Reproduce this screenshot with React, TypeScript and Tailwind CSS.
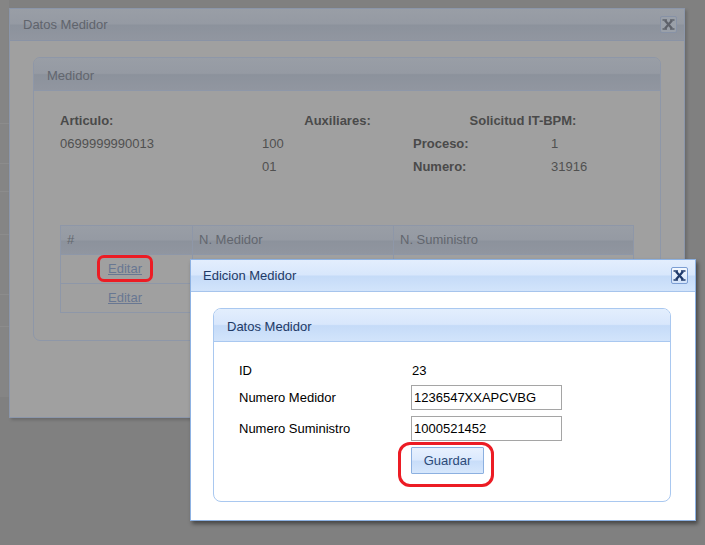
const CloseButton = ({ dim }: { dim?: boolean }) => (
  <span
    className={
      dim
        ? "flex h-[17px] w-[17px] items-center justify-center rounded-[2px] border border-[#8792a6] bg-[#9aa0a9]"
        : "flex h-[17px] w-[17px] items-center justify-center rounded-[2px] border border-[#7c9ed3] bg-[linear-gradient(to_bottom,#f5f9ff,#d2e3fa)]"
    }
  >
    <svg width="13" height="11" viewBox="0 0 13 11" fill="none" stroke={dim ? "#5e626b" : "#1f3a6b"}>
      <path d="M3 1.5L10 9.5M10 1.5L3 9.5" strokeWidth="2.2" />
      <path d="M0.5 1H5M8 1H12.5M0.5 10H5M8 10H12.5" strokeWidth="1.3" />
    </svg>
  </span>
);

const PageBehind = () => (
  <div className="absolute left-0 top-0 flex h-[397px] w-[9px] flex-col bg-[#858585]">
    <div className="h-[124px] shrink-0 border-b border-[#8c8c8c]" />
    <div className="h-[40px] shrink-0 border-b border-[#8c8c8c]" />
    <div className="h-[28px] shrink-0 border-b border-[#8c8c8c]" />
    <div className="h-[43px] shrink-0 border-b border-[#8c8c8c]" />
    <div className="h-[60px] shrink-0 border-b border-[#8c8c8c]" />
    <div className="h-[32px] shrink-0 border-b border-[#8c8c8c]" />
  </div>
);

const OuterDialog = () => (
  <div className="absolute left-[9px] top-[8px] flex h-[410px] w-[676px] flex-col border border-[#8b96aa] bg-[#a0a0a0] shadow-[2px_2px_3px_rgba(0,0,0,0.18)]">
    <div className="flex h-[32px] shrink-0 items-center justify-between border-b border-[#8a93a5] bg-[linear-gradient(to_bottom,#999ea6_0%,#959aa3_48%,#8c929c_52%,#9196a0_100%)] pl-[13px] pr-[7px] text-[#60646c]">
      <span>Datos Medidor</span>
      <CloseButton dim />
    </div>

    <div className="px-[23px] pt-[16px]">
      <section className="rounded-[7px] border border-[#8e97a8]">
        <header className="flex h-[33px] items-center rounded-t-[6px] border-b border-[#8e97a8] bg-[linear-gradient(to_bottom,#999ea6_0%,#959aa3_48%,#8c929c_52%,#9196a0_100%)] pl-[13px] pt-[3px] text-[#62666e]">
          Medidor
        </header>

        <div className="pb-[27px] pl-[26px] pt-[18px] text-[#505050]">
          <div className="grid grid-cols-[202px_151px_138px_82px] leading-[23px]">
            <span className="font-bold text-[#4a4a4a]">Articulo:</span>
            <span className="text-center font-bold text-[#4a4a4a]">Auxiliares:</span>
            <span className="col-span-2 text-center font-bold text-[#4a4a4a]">Solicitud IT-BPM:</span>

            <span>0699999990013</span>
            <span>100</span>
            <span className="font-bold text-[#4a4a4a]">Proceso:</span>
            <span>1</span>

            <span />
            <span>01</span>
            <span className="font-bold text-[#4a4a4a]">Numero:</span>
            <span>31916</span>
          </div>

          <table className="mt-[47px] w-[574px] border-collapse">
            <thead>
              <tr className="bg-[linear-gradient(to_bottom,#999ea6_0%,#959aa3_48%,#8c929c_52%,#9196a0_100%)] text-[#62666e]">
                <th className="h-[29px] w-[132px] border border-[#8e97a8] pl-[6px] text-left font-normal">#</th>
                <th className="h-[29px] w-[201px] border border-[#8e97a8] pl-[6px] text-left font-normal">N. Medidor</th>
                <th className="h-[29px] border border-[#8e97a8] pl-[6px] text-left font-normal">N. Suministro</th>
              </tr>
            </thead>
            <tbody>
              {[0, 1].map((i) => (
                <tr key={i}>
                  <td className="h-[29px] border border-[#8e97a8] pr-[3px] text-center">
                    <span className="relative inline-block">
                      <a className="text-[#687792] underline">Editar</a>
                      {i === 0 && (
                        <span className="absolute -bottom-[3px] -left-[11px] -right-[11px] -top-[4px] rounded-[7px] border-[3px] border-[#ec1c24]" />
                      )}
                    </span>
                  </td>
                  <td className="h-[29px] border border-[#8e97a8]" />
                  <td className="h-[29px] border border-[#8e97a8]" />
                </tr>
              ))}
            </tbody>
          </table>
        </div>
      </section>
    </div>
  </div>
);

const TextInput = ({ value }: { value: string }) => (
  <div className="flex h-[25px] w-[151px] items-center border border-[#a5a5a5] bg-white pl-[2px] text-black">
    {value}
  </div>
);

const EditDialog = () => (
  <div className="absolute left-[190px] top-[259px] flex h-[262px] w-[506px] flex-col border border-[#8db2e3] bg-white shadow-[2px_3px_4px_rgba(0,0,0,0.45)]">
    <div className="flex h-[32px] shrink-0 items-center justify-between border-b border-[#a6c4ec] bg-[linear-gradient(to_bottom,#e3eefd_0%,#d8e7fc_48%,#c5dbf8_52%,#d2e4fb_100%)] pl-[12px] pr-[7px] text-[#1e3a66]">
      <span>Edicion Medidor</span>
      <CloseButton />
    </div>

    <div className="px-[22px] pt-[16px]">
      <section className="w-[458px] rounded-[8px] border border-[#a9c8f0]">
        <header className="flex h-[33px] items-center rounded-t-[7px] border-b border-[#a9c8f0] bg-[linear-gradient(to_bottom,#e3eefd_0%,#d8e7fc_48%,#c5dbf8_52%,#d2e4fb_100%)] pl-[13px] pt-[3px] text-[#1e3a66]">
          Datos Medidor
        </header>

        <div className="flex flex-col pb-[27px] pl-[25px] pt-[18px] text-black">
          <div className="flex h-[22px] items-center">
            <span className="w-[172px]">ID</span>
            <span className="pl-[1px]">23</span>
          </div>
          <div className="mt-[3px] flex items-center">
            <span className="w-[172px]">Numero Medidor</span>
            <TextInput value="1236547XXAPCVBG" />
          </div>
          <div className="mt-[6px] flex items-center">
            <span className="w-[172px]">Numero Suministro</span>
            <TextInput value="1000521452" />
          </div>
          <div className="mt-[6px] flex">
            <span className="w-[172px]" />
            <span className="relative">
              <button className="h-[27px] w-[73px] rounded-[1px] border border-[#8cb0e0] bg-[linear-gradient(to_bottom,#e8f1fe_0%,#dbe9fd_48%,#c8ddf9_52%,#d6e7fc_100%)] text-[#2c4a78]">
                Guardar
              </button>
              <span className="absolute -bottom-[13px] -left-[13px] -right-[10px] -top-[5px] rounded-[12px] border-[3px] border-[#ec1c24]" />
            </span>
          </div>
        </div>
      </section>
    </div>
  </div>
);

const App = () => {
  return (
    <main className="relative h-[545px] w-[705px] overflow-hidden bg-[#808080] font-['Liberation_Sans',Tahoma,Arial,sans-serif] text-[13px]">
      <PageBehind />
      <OuterDialog />
      <EditDialog />
    </main>
  );
};

export default App;
